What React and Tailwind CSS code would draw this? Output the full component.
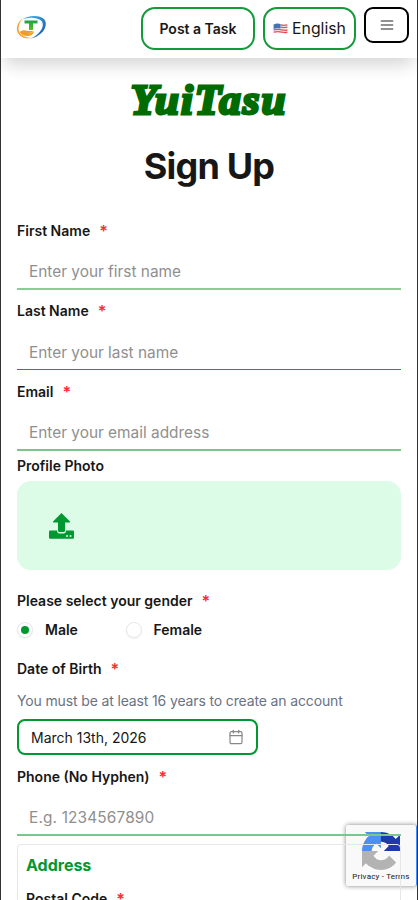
import { useState } from "react";
import { Calendar } from "lucide-react";

const Required = () => <span className="ml-[9px] text-[16px] leading-none text-[#fb2c36]">*</span>;

const Label = ({ htmlFor, required, children }) => (
  <label htmlFor={htmlFor} className="flex h-5 items-center text-[14px] leading-5 font-semibold">
    {children}
    {required && <Required />}
  </label>
);

const Field = ({ id, label, placeholder, line }) => (
  <div>
    <Label htmlFor={id} required>{label}</Label>
    <input
      id={id}
      type="text"
      placeholder={placeholder}
      className={`mt-[14px] block h-[35px] w-full bg-transparent px-3 text-[15.4px] outline-none placeholder:text-[#8f8f8f] ${line}`}
    />
  </div>
);

const Logo = () => (
  <svg viewBox="0 0 32 26" className="h-[26px] w-8" fill="none">
    <defs>
      <linearGradient id="blue" x1="0" y1="0" x2="1" y2="1">
        <stop offset="0" stopColor="#45b9e8" />
        <stop offset="1" stopColor="#1554a5" />
      </linearGradient>
      <linearGradient id="green" x1="0" y1="0" x2="0" y2="1">
        <stop offset="0" stopColor="#16a34a" />
        <stop offset="1" stopColor="#62bd22" />
      </linearGradient>
    </defs>
    <path d="M7 4.500C13 0 25-.5 29.500 4.500c4.500 7-3 17-14 19C24 20 30 12 27 6.500 23 1.500 13 2 7 4.500Z" fill="url(#blue)" />
    <path d="M8 3.500C2 7 0 15 4 19.500c3 3.500 8 4.500 13 3.500-7-.5-13.500-3-13.500-9C3.500 10 5 6.500 8 3.500Z" fill="#efa12f" />
    <path d="M4.500 17c3-2.500 6-2 8-1h5.500c-1 2-3 2-5 2 3 1 4.500-1 6-2-.5 4-4 5-7 5-3 0-5-1-7.500-4Z" fill="#f39a2d" />
    <path d="M9.500 5.500H22.500v3h-4.500V15h-4V8.500H9.500Z" fill="url(#green)" />
  </svg>
);

const Flag = () => (
  <svg viewBox="0 0 16 12" className="h-[11px] w-[15px]">
    <path d="M.5 1.500C5-1 10 3 15.500 1v9.500C10 12.500 6 9 .5 11Z" fill="#f4eeee" />
    <path d="M8 2q4 1 7.500 0M8 4.500q4 1 7.500 0M.5 7.500q5-1 9 0t6 0M.5 10q5-1 9 0t6 0" stroke="#e15357" strokeWidth="1.400" fill="none" />
    <path d="M.5 1.500Q4 0 8 1v5q-4-1-7.500.5Z" fill="#4374ae" />
  </svg>
);

const MenuIcon = () => (
  <svg viewBox="0 0 14 12" className="h-3 w-[14px]" stroke="#222" strokeWidth="1.200">
    <path d="M.8 2h12.400M.8 6h12.400M.8 10h12.400" />
  </svg>
);

const UploadIcon = () => (
  <svg viewBox="0 0 25 26" className="h-[26px] w-[25px] text-[#009830]" fill="currentColor">
    <path d="M12.500 0 21 8.500q.4 1-.8 1H16v8q0 1.500-1.500 1.500h-4Q9 19 9 17.500v-8H4.800q-1.200 0-.8-1Z" />
    <path d="M1.200 17.500H8q0 3 2.500 3h4q2.500 0 2.500-3h6.800Q25 17.500 25 18.700v5.800q0 1.200-1.200 1.200H1.200Q0 25.700 0 24.500v-5.800q0-1.200 1.200-1.200Z" />
    <circle cx="18" cy="23" r="1" fill="#dcfce7" />
    <circle cx="21.500" cy="23" r="1" fill="#dcfce7" />
  </svg>
);

const RecaptchaIcon = () => (
  <svg viewBox="0 0 64 64" className="h-[38px] w-[38px]">
    <path fill="#1c3aa9" d="M64 31.955l-.033-1.370V4.687l-7.160 7.160C50.948 4.674 42.033.093 32.050.093c-10.400 0-19.622 4.960-25.458 12.640l11.736 11.860a15.550 15.550 0 0 1 4.754-5.334c2.050-1.600 4.952-2.906 8.968-2.906.485 0 .86.057 1.135.163 4.976.393 9.288 3.140 11.828 7.124l-8.307 8.307L64 31.953" />
    <path fill="#4a90f7" d="M31.862.094l-1.370.033H4.594l7.160 7.160C4.580 13.147 0 22.060 0 32.046c0 10.400 4.960 19.622 12.640 25.458L24.500 45.768a15.550 15.550 0 0 1-5.334-4.754c-1.600-2.050-2.906-4.952-2.906-8.968 0-.485.057-.86.163-1.135.393-4.976 3.140-9.288 7.124-11.828l8.307 8.307L31.860.095" />
    <path fill="#b3b3b3" d="M.001 32.045l.033 1.370v25.898l7.160-7.160c5.860 7.173 14.774 11.754 24.760 11.754 10.400 0 19.622-4.960 25.458-12.640l-11.736-11.860a15.550 15.550 0 0 1-4.754 5.334c-2.050 1.600-4.952 2.906-8.968 2.906-.485 0-.86-.057-1.135-.163-4.976-.393-9.288-3.140-11.828-7.124l8.307-8.307c-10.522.04-22.400.066-27.295-.005" />
  </svg>
);

const Radio = ({ label, checked, onSelect }) => (
  <label className="flex h-5 items-center text-[14px] leading-5 font-semibold">
    <input type="radio" name="gender" className="sr-only" checked={checked} onChange={onSelect} />
    <span className="flex h-4 w-4 items-center justify-center rounded-full border border-gray-200 bg-white shadow-xs">
      {checked && <span className="h-2 w-2 rounded-full bg-[#009830]" />}
    </span>
    <span className="ml-3">{label}</span>
  </label>
);

export default function App() {
  const [gender, setGender] = useState("Male");

  return (
    <div className="relative h-[900px] overflow-hidden border-x border-[#333] bg-white font-['Inter',sans-serif] text-[#171717]">
      <header className="flex h-[58px] items-start justify-between bg-white pt-[7px] pr-2 pl-[14px] shadow-[0_10px_18px_-4px_rgba(0,0,0,0.18)]">
        <div className="mt-2"><Logo /></div>
        <div className="flex gap-2">
          <button className="h-[43px] w-[114px] rounded-[14px] border-2 border-[#159a3b] text-[14px] font-semibold">Post a Task</button>
          <button className="flex h-[43px] w-[93px] items-center justify-center gap-1 rounded-[14px] border-2 border-[#159a3b] text-[15.800px]">
            <Flag />
            English
          </button>
          <button className="flex h-9 w-[45px] items-center justify-center rounded-[9px] border-2 border-black">
            <MenuIcon />
          </button>
        </div>
      </header>

      <main className="relative z-10 px-4">
        <h2 className="mt-[17px] h-[50px] text-center font-['Liberation_Serif',serif] text-[43px] leading-[50px] font-bold tracking-[2px] text-[#006b00] italic [-webkit-text-stroke:3px_#006b00] [stroke-linejoin:round]">YuiTasu</h2>
        <h1 className="mt-[19px] h-11 text-center text-[36px] leading-11 font-bold tracking-[-0.8px]">Sign Up</h1>

        <form className="mt-[33px]">
          <Field id="first" label="First Name" placeholder="Enter your first name" line="border-b-2 border-[#8acb97] pb-px" />
          <div className="mt-[11px]">
            <Field id="last" label="Last Name" placeholder="Enter your last name" line="border-b border-[#159a3b]" />
          </div>
          <div className="mt-3">
            <Field id="email" label="Email" placeholder="Enter your email address" line="border-b-2 border-[#7cc58c]" />
          </div>
          <div className="mt-[5px]">
            <Label>Profile Photo</Label>
            <div className="mt-[5px] flex h-[89px] items-center rounded-[14px] bg-[#dcfce7] pl-8">
              <UploadIcon />
            </div>
          </div>

          <div className="mt-[21px]">
            <Label required>Please select your gender</Label>
            <div className="mt-[9px] flex">
              <div className="w-[108.500px]"><Radio label="Male" checked={gender === "Male"} onSelect={() => setGender("Male")} /></div>
              <Radio label="Female" checked={gender === "Female"} onSelect={() => setGender("Female")} />
            </div>
          </div>

          <div className="mt-[19px]">
            <Label required>Date of Birth</Label>
            <p className="mt-[12px] text-[14px] leading-5 tracking-[-0.140px] text-[#6a7282]">You must be at least 16 years to create an account</p>
            <button type="button" className="mt-2 flex h-9 w-[241px] items-center justify-between rounded-[8px] border-2 border-[#009830] px-3 text-[14px]">
              March 13th, 2026
              <Calendar size={16} strokeWidth={1.8} className="text-[#888]" />
            </button>
          </div>

          <div className="mt-3">
            <Field id="phone" label="Phone (No Hyphen)" placeholder="E.g. 1234567890" line="border-b-2 border-[#7cc58c] pb-px tracking-[0.150px]" />
          </div>

          <section className="mt-2 h-40 rounded-[4px] border border-[#e5e7eb] px-2 pt-2">
            <h3 className="text-[16px] leading-6 font-bold text-[#009830]">Address</h3>
            <div className="mt-3"><Label required>Postal Code</Label></div>
          </section>
        </form>
      </main>

      <aside className="absolute top-[825px] right-0 flex h-[61px] w-[71px] flex-col items-center overflow-hidden rounded-[2px] border-r border-[#4a90f7] bg-[#f9f9f9] pt-[7px] shadow-[0_0_5px_#808080]">
        <RecaptchaIcon />
        <p className="mt-[2px] font-[Roboto] text-[8px] leading-[10px] tracking-[0.200px] whitespace-nowrap">Privacy - Terms</p>
      </aside>
    </div>
  );
}
